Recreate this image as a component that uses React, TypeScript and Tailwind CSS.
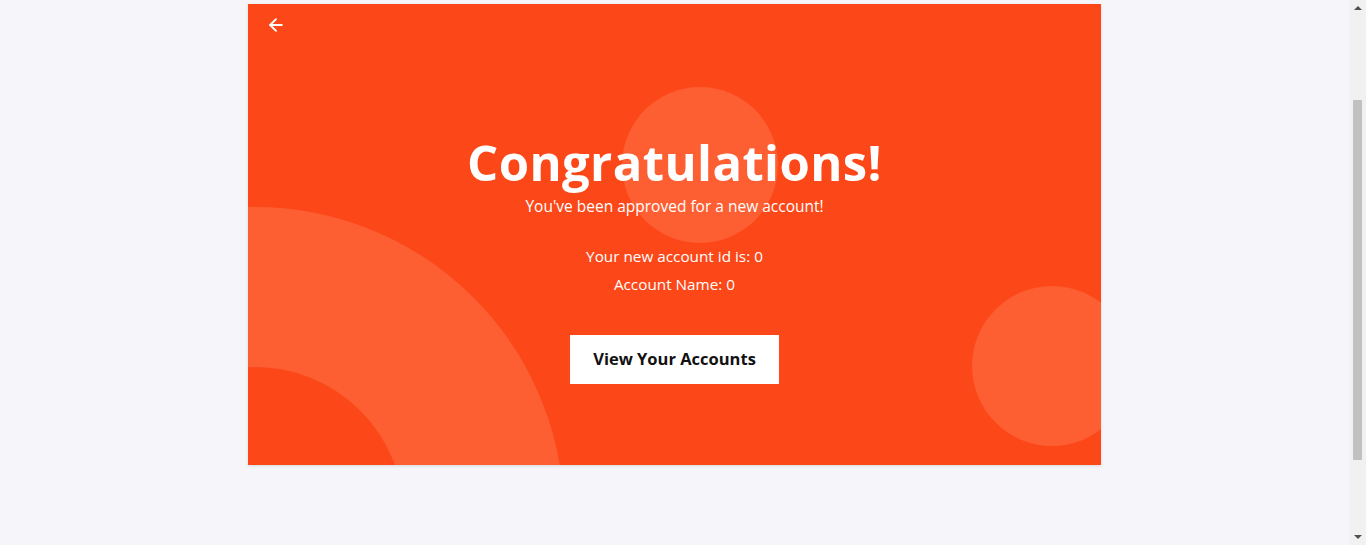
import { ArrowLeft } from "lucide-react";

const font = { fontFamily: '"Open Sans", "Liberation Sans", sans-serif' };

const ApprovedPage = () => {
  return (
    <div className="relative h-[545px] overflow-hidden bg-[#f6f6fa] pt-[4px]" style={font}>
      <div className="relative ml-[248px] h-[461px] w-[853px] overflow-hidden bg-[#fc4718] shadow-[0_1px_3px_rgba(0,0,0,0.12)]">
        {/* decoration */}
        <div className="absolute left-[374px] top-[83px] h-[156px] w-[156px] rounded-full bg-[#fd5e32]" />
        <div className="absolute left-[724px] top-[282px] h-[160px] w-[160px] rounded-full bg-[#fd5e32]" />
        <div className="absolute left-[-302px] top-[203px] h-[618px] w-[618px] rounded-full border-[160px] border-[#fd5e32]" />

        <button className="absolute left-[18px] top-[11px] text-white">
          <ArrowLeft size={20} strokeWidth={2.25} />
        </button>

        <div className="relative flex flex-col items-center pt-[134px] text-center text-white">
          <h1 className="text-[49px] font-bold leading-[48px] tracking-[0.4px]">Congratulations!</h1>
          <p className="mt-[10px] text-[15.5px] leading-[20px]">You've been approved for a new account!</p>
          <p className="mt-[26px] text-[15.3px] leading-[28px]">Your new account id is: 0</p>
          <p className="text-[15.3px] leading-[28px]">Account Name: 0</p>
          <button className="mt-[37px] h-[49px] w-[209px] bg-white text-[16.5px] font-bold text-[#111]">
            View Your Accounts
          </button>
        </div>
      </div>

      {/* browser scrollbar */}
      <div className="absolute right-0 top-0 flex h-full w-[17px] flex-col items-center bg-[#f1f1f1]">
        <div className="mt-[6px] h-0 w-0 border-x-[4px] border-b-[4px] border-x-transparent border-b-[#505050]" />
        <div className="mt-[90px] h-[360px] w-[9px] rounded-[1px] bg-[#c1c1c1]" />
        <div className="mt-auto mb-[6px] h-0 w-0 border-x-[4px] border-t-[4px] border-x-transparent border-t-[#505050]" />
      </div>
    </div>
  );
};

export default ApprovedPage;
